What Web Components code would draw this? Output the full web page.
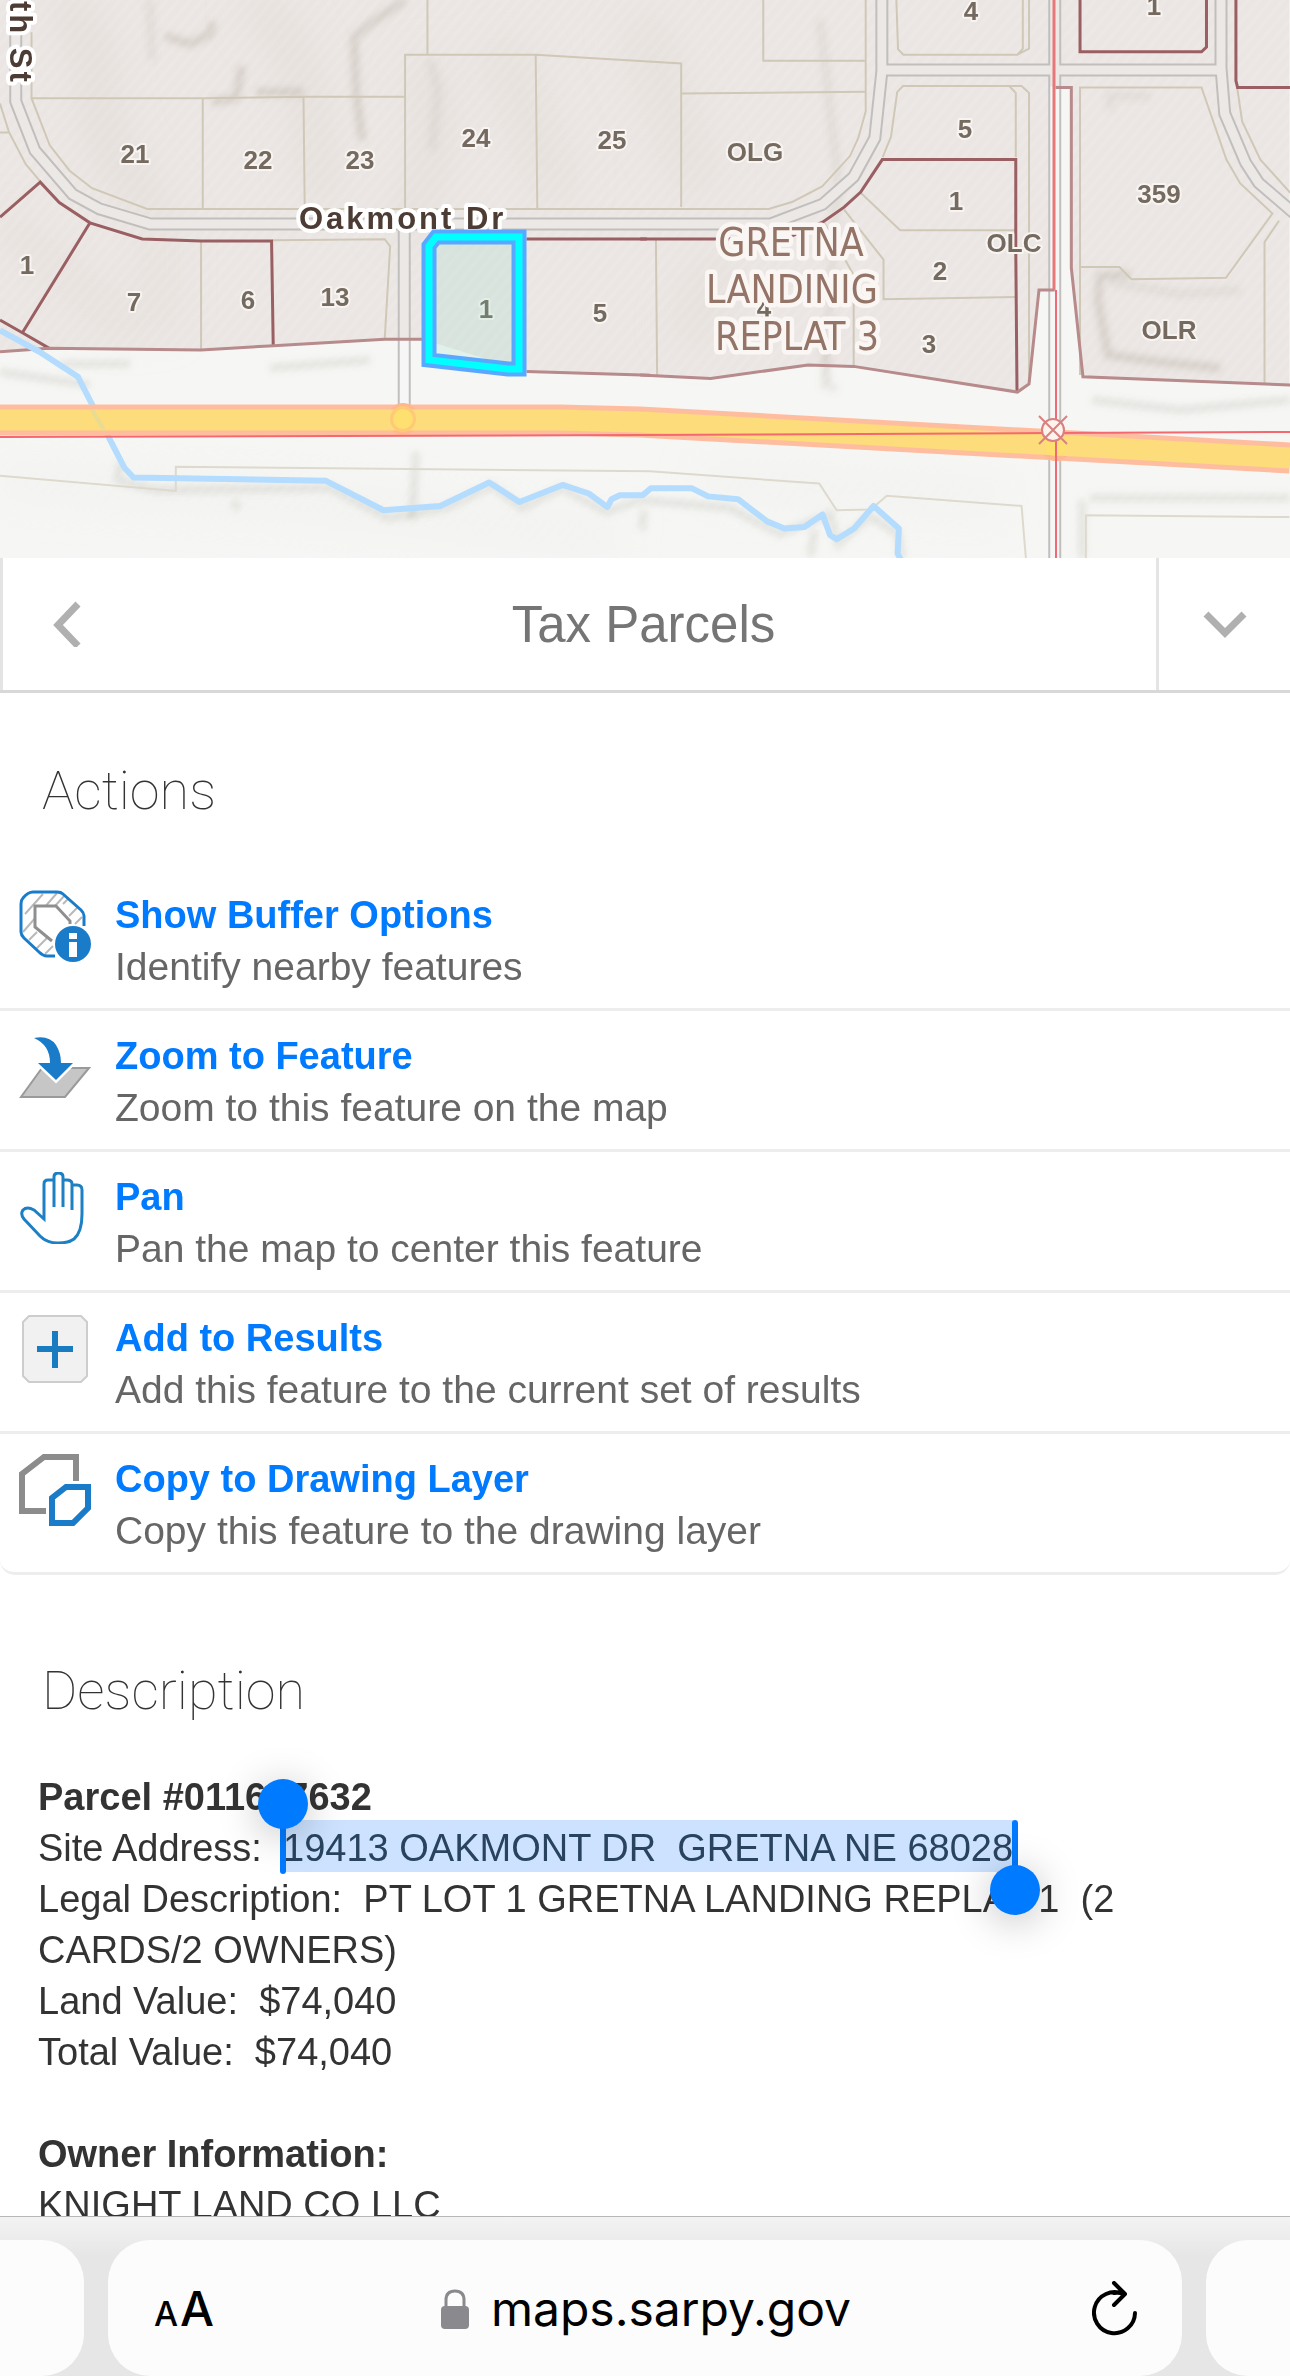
<!DOCTYPE html>
<html lang="en">
<head>
<meta charset="utf-8">
<meta name="viewport" content="width=device-width, initial-scale=1">
<title>Tax Parcels</title>
<style>
  html, body { margin: 0; height: 100%; background: #fff; }
  body { font-family: "Liberation Sans", Arial, sans-serif; color: #333; }
</style>
</head>
<body>
<gis-app>
  <parcel-map slot="map"></parcel-map>
  <panel-header slot="panel">Tax Parcels</panel-header>
  <panel-section slot="panel" heading="Actions">
    <action-list>
      <action-row icon="buffer" label="Show Buffer Options">Identify nearby features</action-row>
      <action-row icon="zoom" label="Zoom to Feature">Zoom to this feature on the map</action-row>
      <action-row icon="pan" label="Pan">Pan the map to center this feature</action-row>
      <action-row icon="add" label="Add to Results">Add this feature to the current set of results</action-row>
      <action-row icon="copy" label="Copy to Drawing Layer">Copy this feature to the drawing layer</action-row>
    </action-list>
  </panel-section>
  <panel-section slot="panel" heading="Description" class="later">
    <parcel-details></parcel-details>
  </panel-section>
  <browser-bar slot="bar"></browser-bar>
</gis-app>

<script>
function define(name, html, setup) {
  const template = document.createElement('template');
  template.innerHTML = html.trim();
  customElements.define(name, class extends HTMLElement {
    constructor() {
      super();
      this.attachShadow({ mode: 'open' }).append(template.content.cloneNode(true));
    }
    connectedCallback() { if (setup) setup(this, this.shadowRoot); }
  });
}

define('gis-app', `
<style>
  :host { display: flex; flex-direction: column; height: 100vh; overflow: hidden; }
  main { flex: 1; min-height: 0; overflow: hidden; }
  ::slotted(.later) { margin-top: 18px; }
</style>
<slot name="map"></slot>
<main><slot name="panel"></slot></main>
<slot name="bar"></slot>`);

/* Map: one SVG; the tile groups hold geometry in tile units, labels are in view units. */
define('parcel-map', `
<style>
  :host { display: block; flex: none; }
  svg { display: block; width: 100%; height: auto; }
  .g * { vector-effect: non-scaling-stroke; }
  path { fill: none; }
  .land { fill: #ebe6e3; }
  .casing { stroke: #c0bfbe; stroke-width: 13; }
  .road { stroke: #ece8e5; stroke-width: 9; }
  .pale { stroke: #f7f6f6; }
  .lot { stroke: #cfc8b7; stroke-width: 2; }
  .faint { stroke: #dddacd; stroke-width: 2; }
  .sub { stroke: #9a5f62; stroke-width: 3; }
  .edge { stroke: #b78a8b; stroke-width: 3; }
  .creek { stroke: #b3dcff; stroke-width: 6; stroke-linejoin: round; }
  .shade path { stroke: #8d7f74; stroke-width: 8; opacity: .22; }
  .shade .light { opacity: .1; }
  .shade .low { stroke: #8f8f84; opacity: .18; }
  .num { font: bold 26px "Liberation Sans", sans-serif; fill: #756a60; text-anchor: middle;
         stroke: #f7f4f1; stroke-width: 4; paint-order: stroke; stroke-linejoin: round; }
  .street { font: bold 31px "Liberation Sans", sans-serif; letter-spacing: 3px; fill: #4d3c34;
         stroke: #fff; stroke-width: 8; paint-order: stroke; stroke-linejoin: round; }
  .plat { font: 39px "DejaVu Sans Condensed", "DejaVu Sans", sans-serif; fill: #937466; text-anchor: middle;
         stroke: #faf6f4; stroke-width: 9; paint-order: stroke; stroke-linejoin: round; }
</style>
<svg viewBox="0 0 1290 558" role="img" aria-label="Parcel map">
  <defs>
    <pattern id="hatch" width="9" height="9" patternUnits="userSpaceOnUse" patternTransform="rotate(40)">
      <rect width="4" height="9" fill="#fff" opacity=".08"/>
    </pattern>
    <filter id="soft" x="-50%" y="-50%" width="200%" height="200%"><feGaussianBlur stdDeviation="3"/></filter>
    <filter id="wide" x="-50%" y="-50%" width="200%" height="200%"><feGaussianBlur stdDeviation="20"/></filter>
  </defs>
  <rect width="1290" height="558" fill="#f6f6f4"/>
  <g class="g" transform="scale(.4146 .3571)">
    <path class="land" d="M0 0H3110V1078L2612 1055 2584 750V245H2544V812H2506L2482 1075 2453 1098 2059 1026 1949 1022 1714 1060 1270 1040 1018 950H928L660 968 485 980 118 975 0 985Z"/>
  </g>
  <g filter="url(#wide)" opacity=".5">
    <path d="M60 0C130 60 60 120 150 200" stroke="#ddd6d1" stroke-width="34"/>
    <path d="M250 0C330 60 300 160 330 200M420 60C450 120 430 180 400 240" stroke="#ded7d2" stroke-width="30"/>
    <path d="M500 40L560 200M640 20L700 190M720 260L690 340" stroke="#e0dad5" stroke-width="40"/>
    <path d="M0 220L130 330M160 200L160 330" stroke="#e0dad5" stroke-width="26"/>
    <path d="M0 480L300 500 620 540M700 480L1000 500" stroke="#ececea" stroke-width="30"/>
  </g>
  <g class="shade" filter="url(#soft)">
    <path d="M165 36L190 44 210 34 213 22"/>
    <path d="M405 0L370 24 354 38 356 90 362 140"/>
    <path d="M242 66L236 98 212 102M256 92H304"/>
    <path class="light" d="M430 60L438 90 432 150M150 0L152 60M820 20L838 180 824 390M1150 96H1110V110"/>
    <path d="M1130 274L1100 276 1098 300 1108 355 1160 362 1220 368"/>
    <path class="light" d="M1110 282L1180 294 1240 290"/>
    <path class="low" d="M270 368L370 360M0 372L90 385M60 364H130"/>
    <path class="low" d="M1092 400L1180 410 1290 400"/>
    <path class="light" d="M825 340L827 380 836 392"/>
    <path class="low" d="M120 462L118 480 155 490 330 488 388 518 446 508 492 486 522 508 562 488 606 512 640 500 730 508 780 534 830 514 838 544 870 516 898 534 902 558"/>
    <path class="low" d="M416 452L412 520M236 500L236 510M644 510L642 530M815 530L810 556"/>
    <path class="low" d="M1090 498H1290M1082 500V558"/>
  </g>
  <rect width="1290" height="558" fill="url(#hatch)"/>

  <g class="g" transform="scale(.4146 .3571)">
    <path class="casing" d="M38-9V284L84 421 175 544 240 585 362 627H1859L1984 572 2059 495 2110 387 2127 200V-9M975 640V1150M2127 196H2944M2544-9V1600M2945-9V190L2954 318 3004 455 3036 512 3134 610"/>
    <path class="road pale" d="M975 950V1150M2544 240V1600"/>
    <path class="road" d="M38-9V284L84 421 175 544 240 585 362 627H1859L1984 572 2059 495 2110 387 2127 200V-9M975 627V950M2127 196H2944M2544-9V240M2945-9V190L2954 318 3004 455 3036 512 3134 610"/>
    <path class="lot" d="M0 290L22 371 62 460 97 508M0 371H22M76 90V275L120 407 168 478 222 527 355 585H1854L1912 565 1983 522 2050 437 2070 387 2088 312V0M76 275H489L732 271H977M489 275V585M732 271L735 585M977 585V153H1292L1643 178V580M1292 153L1296 585M1031 0V153M485 675V978M657 673L928 670 941 690 928 948M1582 672L1585 1050"/>
    <path class="faint" d="M0 1332L424 1375V1307L1568 1320 1976 1354 2018 1429 2100 1427 2139 1388 2464 1417 2477 1600M2619 1568V1443L3110 1448"/>
    <g transform="translate(1544 0)">
      <path class="lot" d="M297 0V170H543M99 262L543 257M618 0L622 138 635 153H910L923 136V0M938 0V136L910 153M585 440L605 383 620 258 634 241H920L938 260V1070M890 241L906 260V440M532 540L627 645H906M492 587L587 727V838L906 832M445 625L515 770V1025M1061 750V245H1354L1414 447 1447 513 1525 598 1413 778 1185 782 1156 748H1061V1050M1541 618L1506 678V1075M1440 245L1452 340 1496 447 1568 540"/>
      <path class="sub" d="M1061-5V145H1354L1366 132V-5M1437-5V226L1441 245H1568"/>
      <path class="sub" d="M0 669H350L440 622 492 580 532 538 584 447H906V700L909 1100"/>
      <path class="edge" d="M1002 245H1040V750L1068 1055 1568 1078M0 1050L170 1060 405 1022 515 1026 910 1098 938 1075 962 812H1000"/>
    </g>
    <path class="sub" d="M0 608L97 510 143 567 217 624 343 669 485 675H655L659 968M217 624L54 932M0 896L54 932 118 975M1270 669H1560"/>
    <path class="edge" d="M0 985L118 975 485 980 660 968 928 950H1018M1270 1040L1568 1051"/>
    <path class="creek" d="M0 925L95 985 188 1055 300 1310 322 1337 785 1346 925 1429 1062 1417 1180 1351 1253 1406 1357 1358 1420 1382 1465 1420 1475 1398 1495 1387H1550L1570 1367H1668L1708 1390 1780 1398 1850 1460 1892 1480 1940 1476 1984 1441 2002 1498 2018 1510 2060 1480 2107 1417 2168 1480 2165 1550 2176 1575"/>
  </g>

  <path d="M0 420H560L640 422 1290 458" stroke="#ffbda0" stroke-width="31"/>
  <circle cx="403" cy="419" r="16" fill="#ffb78d"/>
  <circle cx="1056" cy="445" r="16" fill="#ffb78d"/>
  <path d="M0 420H560L640 422 1290 458" stroke="#fcdc7b" stroke-width="21"/>
  <circle cx="403" cy="419" r="13" fill="#ffc978"/>
  <circle cx="403" cy="419" r="10" fill="#fde06f"/>
  <circle cx="1056" cy="445" r="11" fill="#fde06f"/>
  <path d="M92 410L104 430" stroke="#eadb93" stroke-width="4"/>
  <path d="M0 437L640 435 1050 433 1290 432" stroke="#f4686f" stroke-width="2"/>
  <path d="M1054 0V290" stroke="#e8777a" stroke-width="3"/>
  <path d="M1056 290V558" stroke="#ef6a75" stroke-width="2"/>
  <circle cx="1053" cy="430" r="11" fill="#fff3ee" stroke="#d98080" stroke-width="2"/>
  <path d="M1039 416L1067 444M1067 416L1039 444" stroke="#d98080" stroke-width="2"/>

  <g class="num">
    <text x="135" y="163">21</text><text x="258" y="169">22</text><text x="360" y="169">23</text>
    <text x="476" y="147">24</text><text x="612" y="149">25</text><text x="27" y="274">1</text>
    <text x="134" y="311">7</text><text x="248" y="309">6</text><text x="335" y="306">13</text>
    <text x="486" y="318">1</text><text x="600" y="322">5</text><text x="971" y="20">4</text>
    <text x="1154" y="15">1</text><text x="965" y="138">5</text><text x="755" y="161">OLG</text>
    <text x="956" y="210">1</text><text x="1014" y="252">OLC</text><text x="940" y="280">2</text>
    <text x="929" y="353">3</text><text x="764" y="317">4</text><text x="1159" y="203">359</text>
    <text x="1169" y="339">OLR</text>
  </g>
  <text class="street" x="299" y="229">Oakmont Dr</text>
  <text class="street" transform="translate(10 1) rotate(90)">th St</text>
  <g class="plat">
    <text x="791" y="256">GRETNA</text>
    <text x="792" y="303">LANDINIG</text>
    <text x="797" y="350">REPLAT 3</text>
  </g>
  <polygon points="436,238 519,238 519,370 508,369 429,360 429,246" fill="#82d7be" opacity=".18"/>
  <path d="M436 237H519V369H508L429 360V246Z" stroke="#58a8ff" stroke-width="15"/>
  <path d="M436 237H519V369H508L429 360V246Z" stroke="#00ffff" stroke-width="7"/>
</svg>`);

define('panel-header', `
<style>
  :host { display: grid; grid-template-columns: 131px 1fr 134px; height: 132px; background: #fff;
          border-bottom: 3px solid #d8d8d8; }
  h1 { margin: 0; padding-top: 2px; align-self: center; text-align: center; font: 51px/60px "Liberation Sans", Arial, sans-serif; color: #757575; }
  button { display: flex; align-items: center; margin: 0; padding: 0; border: 0 solid #e4e4e4; background: none; }
  .back { border-left-width: 3px; padding-left: 46px; }
  .down { border-left-width: 3px; justify-content: center; }
  path { fill: none; stroke: #b0b0b0; stroke-width: 7; }
</style>
<button class="back" aria-label="Back"><svg width="34" height="46"><path d="M29 3L9 24 29 45"/></svg></button>
<h1><slot></slot></h1>
<button class="down" aria-label="Collapse"><svg width="46" height="32"><path d="M4 6L23 25 42 6"/></svg></button>`);

define('panel-section', `
<style>
  :host { display: block; }
  h2 { margin: 0; padding: 68px 42px 49px; font: 100 54px/60px Roboto, "Liberation Sans", sans-serif; color: #333; }
</style>
<h2></h2>
<slot></slot>`, (el, root) => { root.querySelector('h2').textContent = el.getAttribute('heading'); });

define('action-list', `
<style>
  :host { display: block; border-bottom: 3px solid #ededed; border-radius: 0 0 15px 15px; }
  ::slotted(:not(:last-child)) { border-bottom: 3px solid #ededed; }
</style>
<slot></slot>`);

const ICONS = {
  buffer: `
    <path d="M6 24L24 4M4 42L38 3M10 50L18 42M44 14L50 8M36 16L46 5M50 26L58 18M17 59L28 48M56 34L63 27M26 64L34 56" stroke="#b9b9b9" stroke-width="2"/>
    <path d="M65 36V26Q65 23 62 20L44 4Q42 2 38 2H14Q9 2 4 8Q2 10 2 14V42Q2 45 5 48L20 62Q24 66 28 66H36" stroke="#1a7cc9" stroke-width="3"/>
    <path d="M51 34V31L37 16H16V37L33 51" fill="#fff" stroke="#8f8f8f" stroke-width="3"/>
    <circle cx="54" cy="54" r="18" fill="#1a7cc9"/>
    <path d="M50 43H58V49H50ZM50 52H58V67H50Z" fill="#fff"/>`,
  zoom: `
    <path d="M23 37H70L46 66H2Z" fill="#c6c6c6" stroke="#9a9a9a" stroke-width="2"/>
    <path d="M15 7Q30 4 37 14Q42 22 42 32H54L37 49 19 32H31Q31 14 15 7Z" fill="#1a7cc9" stroke="#fff" stroke-width="5" paint-order="stroke"/>`,
  pan: `
    <path d="M35 35V5Q35 1 39.500 1Q44 1 44 5V35M44 8H48Q53 8 53 12V38M53 13H58Q63 13 63 18V42Q63 60 55 67Q50 71 39 71Q28 71 21 64L5 47Q1 42 4 38Q8 34 15 38L25 47V12Q25 8 29 8H35" stroke="#1e80c4" stroke-width="3"/>`,
  add: `
    <path d="M10 3H62L68 9V63L62 69H10L4 63V9Z" fill="#f1f1f1" stroke="#cdcdcd" stroke-width="2"/>
    <path d="M36 18V55M18 36H54" stroke="#1a7cc0" stroke-width="6"/>`,
  copy: `
    <path d="M57 27V3H25L3 20V57H27" stroke="#8c8c8c" stroke-width="6"/>
    <path d="M33 69V44L47 33H69V54L54 69Z" stroke="#1a7cc9" stroke-width="6"/>`
};
define('action-row', `
<style>
  :host { display: block; }
  a { display: flex; align-items: flex-start; gap: 24px; padding: 20px 19px 16px; text-decoration: none;
      font-size: 39px; line-height: 51px; }
  svg { flex: none; width: 72px; height: 72px; fill: none; }
  .text { display: flex; flex-direction: column; }
  strong { color: #007aff; font-size: 38px; }
  .sub { color: #666; }
</style>
<a href="#"><svg viewBox="0 0 72 72" aria-hidden="true"></svg>
<span class="text"><strong></strong><span class="sub"><slot></slot></span></span></a>`, (el, root) => {
  root.querySelector('svg').innerHTML = ICONS[el.getAttribute('icon')];
  root.querySelector('strong').textContent = el.getAttribute('label');
});

define('text-selection', `
<style>
  :host { position: relative; padding: 7px 0 3px; background: #cce2ff; color: #29435f; }
  i { position: absolute; width: 6px; height: 54px; border-radius: 3px; background: #007aff; top: 0; }
  i::before { content: ""; position: absolute; left: -22px; width: 50px; height: 50px; border-radius: 50%;
              background: #007aff; box-shadow: 0 6px 40px rgba(0, 0, 0, .25); }
  .start { left: -3px; } .start::before { top: -41px; }
  .end { right: -5px; } .end::before { bottom: -41px; }
</style><slot></slot><i class="start"></i><i class="end"></i>`);

define('parcel-details', `
<style>
  :host { display: block; padding: 2px 38px 0; font-size: 38px; line-height: 51px; color: #333; }
  p { margin: 0 0 51px; white-space: pre-wrap; }
</style>
<p><strong>Parcel #011607632</strong>
Site Address:  <text-selection>19413 OAKMONT DR  GRETNA NE 68028</text-selection>
Legal Description:  PT LOT 1 GRETNA LANDING REPLAT 1  (2 CARDS/2 OWNERS)
Land Value:  $74,040
Total Value:  $74,040</p>
<p><strong>Owner Information:</strong>
KNIGHT LAND CO LLC</p>`);

define('browser-bar', `
<style>
  :host { display: flex; gap: 24px; flex: none; padding-top: 23px; border-top: 1px solid #b8b8b8;
          background: linear-gradient(#f3f3f3, #e6e6e6 40px); overflow: hidden; }
  .tab { flex: 0 0 84px; background: #fcfcfc; }
  .prev { border-radius: 0 42px 42px 0; }
  .next { border-radius: 42px 0 0 42px; }
  .bar { flex: 1; display: grid; grid-template-columns: 1fr auto 1fr; align-items: center; height: 136px; box-sizing: border-box;
         padding: 2px 44px 0 46px; border-radius: 42px; background: #fcfcfc; }
  button { border: 0; padding: 0; background: none; color: #000; font: 48px/60px Inter, sans-serif; }
  .aa { justify-self: start; display: flex; align-items: baseline; gap: 2px; font-weight: 500; }
  .aa small { font-size: 34px; line-height: 40px; }
  .url { display: flex; align-items: center; gap: 22px; }
  .reload { justify-self: end; display: flex; }
  svg { display: block; }
</style>
<div class="tab prev"></div>
<div class="bar">
  <button class="aa" aria-label="Page settings"><small>A</small><span>A</span></button>
  <button class="url"><svg width="28" height="40" viewBox="0 0 28 40"><rect y="17" width="28" height="23" rx="4" fill="#8a8a8e"/><path d="M5 18V11Q5 2 14 2Q23 2 23 11V18" fill="none" stroke="#8a8a8e" stroke-width="3"/></svg><span>maps.sarpy.gov</span></button>
  <button class="reload" aria-label="Reload"><svg width="46" height="56" viewBox="0 0 46 56" fill="none" stroke="#000" stroke-width="4" stroke-linecap="round" stroke-linejoin="round"><path d="M43 32A20.500 20.500 0 1 1 31 13M22 2L33 13 22 24M32 13Q27 11 22 12"/></svg></button>
</div>
<div class="tab next"></div>`);
</script>
</body>
</html>
